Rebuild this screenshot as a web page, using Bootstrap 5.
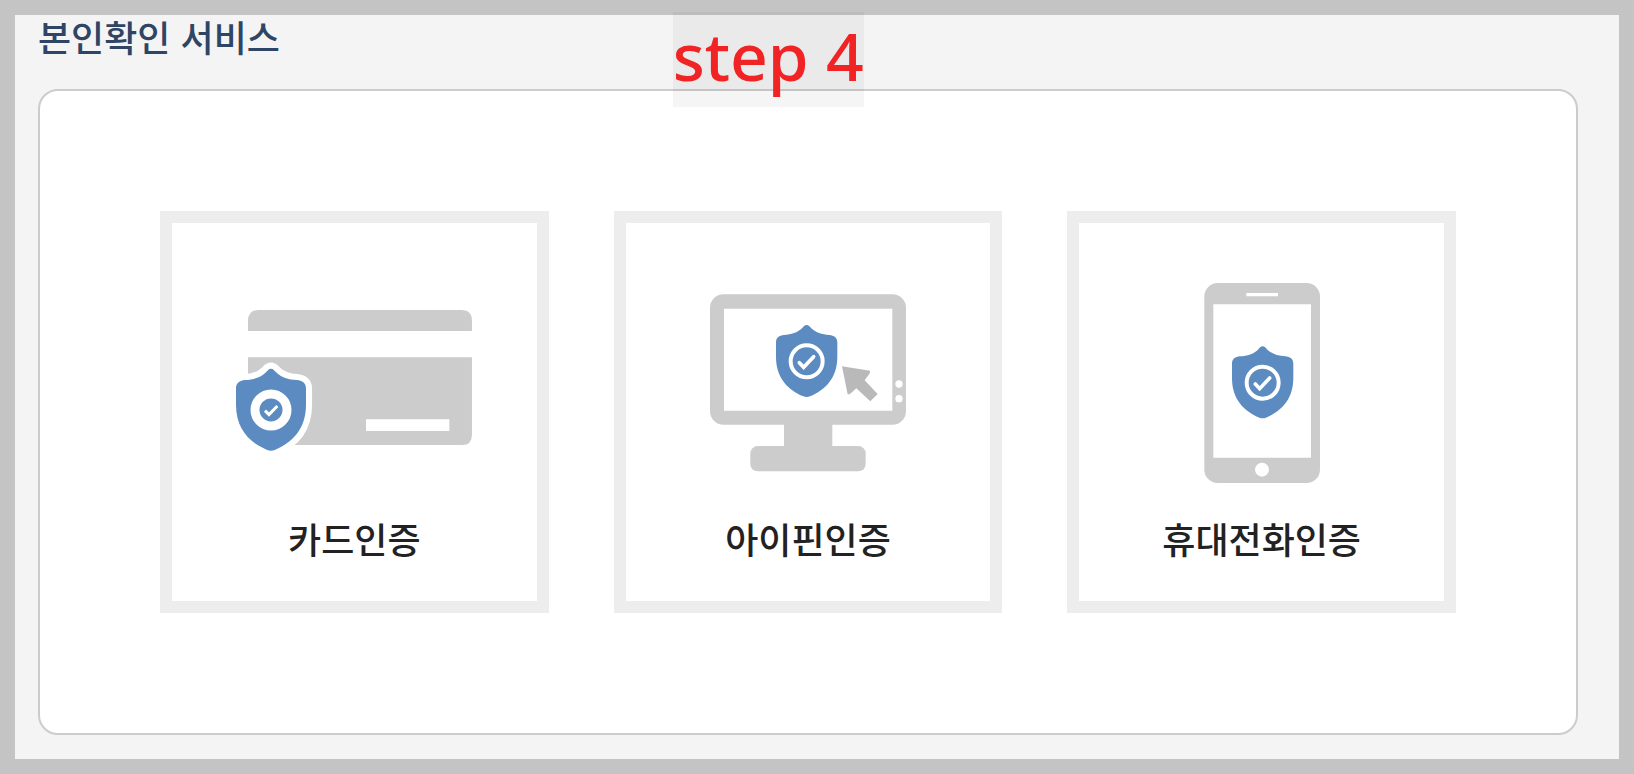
<!DOCTYPE html>
<html lang="ko">
<head>
<meta charset="utf-8">
<meta name="viewport" content="width=device-width, initial-scale=1">
<title>본인확인 서비스</title>
<link href="https://cdn.jsdelivr.net/npm/bootstrap@5.3.0/dist/css/bootstrap.min.css" rel="stylesheet">
<style>
  body { background: #f4f4f4; font-family: "Noto Sans CJK KR", sans-serif; }
  .page-frame { border: 15px solid #c4c4c4; padding: 0 41px 24px 23px; }
  .page-title { font-size: 36px; line-height: 42px; font-weight: 500; color: #2f4566; margin-bottom: 32px; }
  .auth-panel { border: 2px solid #ccc; border-radius: 20px; padding: 120px; }
  .auth-row { --bs-gutter-x: 65px; --bs-gutter-y: 40px; }
  .auth-card { border: 12px solid #ededed; color: #222; padding: 60px 0 36px; gap: 28px; }
  .auth-card:hover { border-color: #dfe6ee; }
  .auth-name { font-size: 36px; line-height: 54px; font-weight: 500; }
  .step-tag { left: 41%; top: -3px; padding: 0 0 8px; background: rgba(0, 0, 0, .04); color: #f02424;
    font: 500 66px/87px "Noto Sans", sans-serif; white-space: nowrap; }
  @media (max-width: 1199px) { .auth-panel { padding: 40px; } }
</style>
</head>
<body>
<svg width="0" height="0" class="position-absolute" aria-hidden="true">
  <defs>
    <path id="shield" d="M0 0C6 0 9 5 14 10C28 23 45 29 68 30C82 31 92 38 92 52V95C92 160 55 195 10 214Q0 218-10 214C-55 195-92 160-92 95V52C-92 38-82 31-68 30C-45 29-28 23-14 10C-9 5-6 0 0 0Z"/>
    <g id="shield-check">
      <use href="#shield" fill="#5b8bc1"/>
      <circle cy="109" r="48" fill="none" stroke="#fff" stroke-width="12"/>
      <path d="M-22 113L-9 127L21 95" fill="none" stroke="#fff" stroke-width="11" stroke-linecap="round"/>
    </g>
  </defs>
</svg>
<main class="page-frame min-vh-100 position-relative">
  <h1 class="page-title">본인확인 서비스</h1>
  <section class="auth-panel bg-white">
    <div class="row row-cols-1 row-cols-lg-3 auth-row">
      <div class="col">
        <a href="#card" class="auth-card d-flex flex-column align-items-center text-decoration-none">
          <svg width="260" height="200" viewBox="0 0 260 200" aria-hidden="true">
            <g transform="translate(-4 7) scale(.3333)">
              <path fill="#ccc" d="M84 123V92Q84 60 116 60H724Q756 60 756 92V123ZM84 202H756V435Q756 465 726 465H84Z"/>
              <path fill="#fff" d="M438 388H688V423H438ZM80 380H153L225 466V480H80Z"/>
              <g transform="translate(153 236) scale(1.141)">
                <use href="#shield" fill="#fff" stroke="#fff" stroke-width="32"/>
                <use href="#shield" fill="#5b8bc1"/>
              </g>
              <circle cx="153" cy="360" r="48" fill="none" stroke="#fff" stroke-width="27"/>
              <path d="M135 362L147 374L172 348" fill="none" stroke="#fff" stroke-width="9"/>
            </g>
          </svg>
          <span class="auth-name">카드인증</span>
        </a>
      </div>
      <div class="col">
        <a href="#ipin" class="auth-card d-flex flex-column align-items-center text-decoration-none">
          <svg width="260" height="200" viewBox="0 0 260 200" aria-hidden="true">
            <g transform="translate(17 -3) scale(.3333)">
              <rect x="45" y="43" width="588" height="391" rx="40" fill="#ccc"/>
              <path fill="#fff" d="M87 86H592V392H87Z"/>
              <path fill="#ccc" d="M267 430H412V500H267Z"/>
              <rect x="166" y="498" width="346" height="76" rx="22" fill="#ccc"/>
              <circle cx="612" cy="312" r="11" fill="#fff"/>
              <circle cx="612" cy="356" r="11" fill="#fff"/>
              <path fill="#b9b9b9" d="M441 259L525 272V279L509 301L548 342L526 364L484 325L464 343H458Z"/>
              <use href="#shield-check" x="335" y="135"/>
            </g>
          </svg>
          <span class="auth-name">아이핀인증</span>
        </a>
      </div>
      <div class="col">
        <a href="#phone" class="auth-card d-flex flex-column align-items-center text-decoration-none">
          <svg width="260" height="200" viewBox="0 0 260 200" aria-hidden="true">
            <g transform="translate(48 -13) scale(.3333)">
              <rect x="73" y="39" width="347" height="600" rx="40" fill="#ccc"/>
              <path fill="#fff" d="M100 103H393V563H100ZM199 69H294V79H199Z"/>
              <circle cx="246" cy="599" r="21" fill="#fff"/>
              <use href="#shield-check" x="248" y="229"/>
            </g>
          </svg>
          <span class="auth-name">휴대전화인증</span>
        </a>
      </div>
    </div>
  </section>
  <!-- progress label floating over the top edge of the panel -->
  <div class="step-tag position-absolute">step 4</div>
</main>
<script src="https://cdn.jsdelivr.net/npm/bootstrap@5.3.0/dist/js/bootstrap.bundle.min.js"></script>
</body>
</html>
